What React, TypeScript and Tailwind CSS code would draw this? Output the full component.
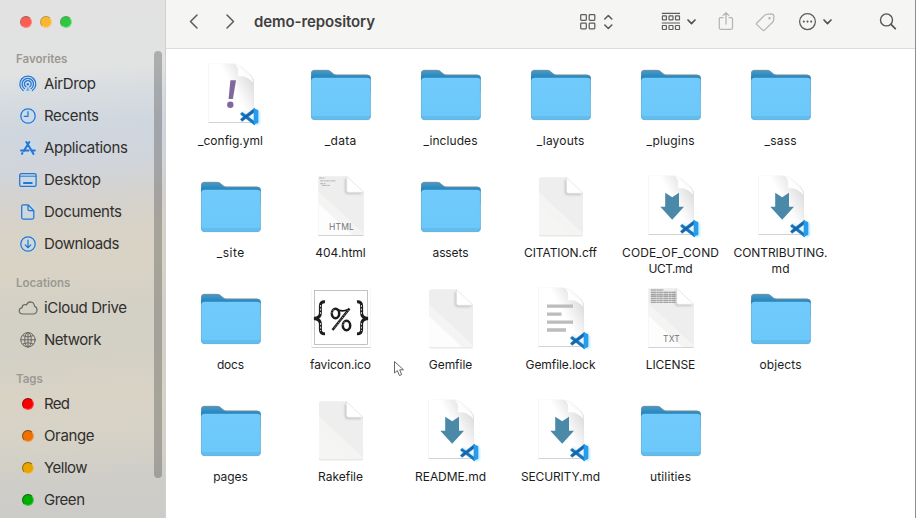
import React from "react";

type Kind = "folder" | "yml" | "md" | "lock" | "html" | "txt" | "blank" | "plain" | "ico";
type Entry = { lines: string[]; kind: Kind; w: number };

const entries: Entry[] = [
  { lines: ["_config.yml"], kind: "yml", w: 65 },
  { lines: ["_data"], kind: "folder", w: 31.5 },
  { lines: ["_includes"], kind: "folder", w: 54 },
  { lines: ["_layouts"], kind: "folder", w: 47.5 },
  { lines: ["_plugins"], kind: "folder", w: 48 },
  { lines: ["_sass"], kind: "folder", w: 32 },
  { lines: ["_site"], kind: "folder", w: 27.5 },
  { lines: ["404.html"], kind: "html", w: 50.5 },
  { lines: ["assets"], kind: "folder", w: 36 },
  { lines: ["CITATION.cff"], kind: "blank", w: 73 },
  { lines: ["CODE_OF_COND", "UCT.md"], kind: "md", w: 97 },
  { lines: ["CONTRIBUTING.", "md"], kind: "md", w: 94 },
  { lines: ["docs"], kind: "folder", w: 27 },
  { lines: ["favicon.ico"], kind: "ico", w: 61 },
  { lines: ["Gemfile"], kind: "plain", w: 43.5 },
  { lines: ["Gemfile.lock"], kind: "lock", w: 70 },
  { lines: ["LICENSE"], kind: "txt", w: 49.5 },
  { lines: ["objects"], kind: "folder", w: 42 },
  { lines: ["pages"], kind: "folder", w: 34.5 },
  { lines: ["Rakefile"], kind: "blank", w: 45 },
  { lines: ["README.md"], kind: "md", w: 71 },
  { lines: ["SECURITY.md"], kind: "md", w: 79 },
  { lines: ["utilities"], kind: "folder", w: 41 },
];

function Defs() {
  return (
    <svg className="absolute h-0 w-0" aria-hidden="true">
      <defs>
        <linearGradient id="front" x1="0" y1="0" x2="0" y2="1">
          <stop offset="0" stopColor="#70cbfc" />
          <stop offset="1" stopColor="#6cc8f9" />
        </linearGradient>
        <linearGradient id="back" x1="0" y1="0" x2="0" y2="1">
          <stop offset="0" stopColor="#4a9ac6" />
          <stop offset="0.4" stopColor="#1f82bb" />
        </linearGradient>
        <linearGradient id="curl" x1="0" y1="1" x2="1" y2="0">
          <stop offset="0.25" stopColor="#cfcfcf" />
          <stop offset="0.5" stopColor="#ffffff" />
          <stop offset="0.85" stopColor="#ebebeb" />
        </linearGradient>
        <linearGradient id="topShade" x1="0.45" y1="0.3" x2="0.8" y2="0.05">
          <stop offset="0" stopColor="#ffffff" />
          <stop offset="1" stopColor="#dedede" />
        </linearGradient>
        <filter id="drop" x="-10%" y="-10%" width="120%" height="125%">
          <feDropShadow dx="0" dy="0.5" stdDeviation="0.5" floodColor="#000" floodOpacity="0.35" />
        </filter>
        <filter id="soft" x="-20%" y="-20%" width="140%" height="140%">
          <feGaussianBlur stdDeviation="1" />
        </filter>
      </defs>
    </svg>
  );
}

function Folder() {
  return (
    <>
      <path d="M2 13.500V11.500q0-3.500 3.500-3.500H18q2.200 0 3.800 1.400L24.500 11.700q1.200 1 3 1H58q3.800 0 3.800 3.500V30H2z" fill="url(#back)" />
      <path d="M2.500 13.500V11.500q0-3.200 3-3.200H18q2 0 3.600 1.400L24.300 12q1.200 1 3 1H58q3.500 0 3.500 3" fill="none" stroke="#80919b" strokeWidth=".8" />
      <path d="M2 20q0-4.200 3.800-4.200H58q3.800 0 3.800 3.800V54q0 4-3.800 4H5.800q-3.800 0-3.800-4z" fill="url(#front)" />
      <path d="M2.200 54H61.600q0 3.800-3.600 3.800H5.800q-3.600 0-3.600-3.800z" fill="#62bdee" />
      <path d="M2.400 18.500V54q0 3.700 3.500 3.700H58q3.400 0 3.400-3.700V17.500" fill="none" stroke="#6fa6c6" strokeWidth=".7" opacity=".75" />
    </>
  );
}

function CodeBadge() {
  return (
    <g>
      <path d="M43 50 45 48.500 60 60V62L56 63z" fill="#b9eaff" opacity=".6" filter="url(#soft)" />
      <path d="M57 47 61 50V61L57 63.500z" fill="#9fe2ff" opacity=".7" filter="url(#soft)" />
      <path d="M41.500 51.800 43.200 50.300 55.500 59.600V63L42 52.800z" fill="#1475bd" stroke="#1475bd" strokeWidth=".5" strokeLinejoin="round" />
      <path d="M41.500 57.800 43.200 59.300 55.500 50V46.200L42 56.700z" fill="#1267ae" stroke="#1267ae" strokeWidth=".5" strokeLinejoin="round" />
      <path d="M54.700 46 59.300 48.200V60.700L54.700 63z" fill="#279cec" />
    </g>
  );
}

function CurledPage({ children }: { children?: React.ReactNode }) {
  return (
    <>
      <path d="M9.500 1.800H35q5 .5 10.500 5.500l6.500 6q2.800 3 2.800 7V60H9.500z" fill="url(#topShade)" filter="url(#drop)" />
      <path d="M35.500 2q4.500 2.500 3.600 12.800 8-1.800 15.400 6-.4-5-3.500-8L45 6.800Q40 2.400 35.500 2z" fill="url(#curl)" />
      <path d="M39.100 5.500V14.800Q44 13.500 47.500 14.800z" fill="#fff" />
      {children}
      <CodeBadge />
    </>
  );
}

function FoldedPage({ shade, wide, children }: { shade: boolean; wide?: boolean; children?: React.ReactNode }) {
  return (
    <g transform={wide ? "translate(-1.2 -1.300) scale(1.037 1.020)" : undefined}>
      <path d="M11.500 3.500H37.500L54 19.500V60q0 1.200-1.200 1.200H11.200Q10 61.200 10 60V5q0-1.500 1.500-1.500z" fill={shade ? "#f5f5f4" : "#fdfdfd"} filter="url(#drop)" />
      <path d="M11.500 3.500H37.500L54 19.500V60L10 19V5q0-1.500 1.500-1.500z" fill="#eeeeee" />
      <path d="M10 18 54 59.500V61H43L10 30z" fill="#f4f4f3" />
      <path d="M36.800 6V18q0 2 2 2H52" fill="none" stroke="#b5b5b5" strokeWidth="1.500" filter="url(#soft)" />
      <path d="M37.500 3.500V17.500q0 1.800 1.800 1.800H54z" fill="#fff" stroke="#d6d6d6" strokeWidth=".5" />
      {children}
    </g>
  );
}

function FileIcon({ kind }: { kind: Kind }) {
  return (
    <svg width="64" height="64" viewBox="0 0 64 64" className="block overflow-visible">
      {kind === "folder" && <Folder />}
      {kind === "yml" && (
        <CurledPage>
          <path d="M31.400 18.300H37L33.900 37H29.600z" fill="#80689f" />
          <circle cx="31.300" cy="42.700" r="3.200" fill="#80689f" />
        </CurledPage>
      )}
      {kind === "md" && (
        <CurledPage>
          <path d="M26.200 18.800 33.200 23.200 40 18.800V32.700H45L33.200 45.700 21.300 32.700H26.200z" fill="#4a8aa8" />
        </CurledPage>
      )}
      {kind === "lock" && (
        <CurledPage>
          <path d="M18 20.200H44M18 28.200H32.500M18 36.200H44M18 44H37" stroke="#bcbcbc" strokeWidth="3.300" />
        </CurledPage>
      )}
      {kind === "blank" && <FoldedPage shade />}
      {kind === "plain" && <FoldedPage shade={false} />}
      {kind === "html" && (
        <FoldedPage shade={false} wide>
          <path d="M11 5.200H16M12 8H27M12 10.800H17M14 12.500H21" stroke="#a2a2a2" strokeWidth=".8" strokeDasharray="3 .6 1.500 .4" />
          <text x="32.500" y="56" textAnchor="middle" fontSize="8.200" fontFamily="Inter, sans-serif" fill="#777" letterSpacing=".2">HTML</text>
        </FoldedPage>
      )}
      {kind === "txt" && (
        <FoldedPage shade={false} wide>
          <path d="M12.500 5.200H25M12.500 7.400H37M12.500 9.300H37M12.500 11.200H37M12.500 13.200H37M12.500 15.200H37M12.500 17.200H37" stroke="#8b8b8b" strokeWidth="1" strokeDasharray="5 .4 2.400 .3 3.500 .5" />
          <text x="32.500" y="55.800" textAnchor="middle" fontSize="8.200" fontFamily="Inter, sans-serif" fill="#777" letterSpacing=".2">TXT</text>
        </FoldedPage>
      )}
      {kind === "ico" && (
        <>
          <rect x="2.500" y="3" width="59.200" height="58" fill="#fff" filter="url(#drop)" />
          <rect x="5.500" y="4.500" width="53" height="54" fill="#fff" stroke="#a9a9a9" strokeWidth=".7" />
          <g fill="none" stroke="#1c1c1c" strokeLinecap="butt">
            <path d="M16 15.800Q11.400 15.400 11.400 20V27Q11.400 32 5 32.500 11.400 33 11.400 38V43.500Q11.400 48 16 47.800" strokeWidth="3" />
            <path d="M48 15.800Q52.600 15.400 52.600 20V27Q52.600 32 59 32.500 52.600 33 52.600 38V43.500Q52.600 48 48 47.800" strokeWidth="3" />
            <path d="M11.600 19V29M11.600 37V45M52.400 19V29M52.400 37V45" stroke="#d5d5d5" strokeWidth="1" strokeDasharray="2 1.500" />
            <path d="M40.500 22.500 23.500 44" strokeWidth="2.400" />
            <ellipse cx="26.500" cy="27.500" rx="3.700" ry="4.700" strokeWidth="2.500" />
            <ellipse cx="37.500" cy="39.500" rx="3.700" ry="4.700" strokeWidth="2.500" />
            <path d="M27 23Q33 26.500 39 23.500" strokeWidth="1.800" />
            <path d="M39.500 24 24.500 43M23 27.500a3.500 4.500 0 0 1 3.500-4.500M34 39.500a3.500 4.500 0 0 1 3.500-4.500" stroke="#c9c9c9" strokeWidth=".7" strokeDasharray="1.500 1.500" />
          </g>
        </>
      )}
    </svg>
  );
}

function Label({ text, w }: { text: string; w?: number }) {
  return (
    <svg width="108" height="16" className="block overflow-visible">
      <text x="53.500" y="12.300" textAnchor="middle" fontSize="12" fontWeight="400" fontFamily="Inter, sans-serif" fill="#1c1c1c" textLength={w} lengthAdjust="spacing">
        {text}
      </text>
    </svg>
  );
}

const blue = "#2476d2";
const grey = "#686762";

function SideIcon({ name }: { name: string }) {
  const c = name === "cloud" || name === "globe" ? grey : blue;
  return (
    <svg width="20" height="20" viewBox="0 0 20 20" fill="none" stroke={c} strokeWidth="1.250" strokeLinecap="round" strokeLinejoin="round" className="block overflow-visible">
      {name !== "cloud" && name !== "globe" && <circle cx="10.500" cy="10.500" r="8.500" fill="#bfe0fb" stroke="none" opacity=".4" filter="url(#soft)" />}
      {name === "airdrop" && (
        <>
          <path d="M5.200 16.600a8 8 0 1 1 9.200 0M6.500 14.700a5.700 5.700 0 1 1 6.600 0M7.900 12.800a3.400 3.400 0 1 1 3.800 0" />
          <circle cx="9.800" cy="10.200" r="1.200" fill={c} stroke="none" />
          <path d="M9.800 12.500 7.800 16.800H11.800z" fill={c} stroke="none" opacity=".5" />
        </>
      )}
      {name === "clock" && (
        <>
          <circle cx="10" cy="10" r="7.200" />
          <path d="M10 5.500V10.300H6.200" />
        </>
      )}
      {name === "apps" && (
        <g strokeWidth="2">
          <path d="M8.300 4 9.900 6.600M11.300 4 5.800 13M4 15.800 4.500 15M9.900 6.600 15.500 16" />
          <path d="M3 12.500H10.600M14.200 12.500H16.800" />
        </g>
      )}
      {name === "desktop" && (
        <>
          <rect x="1.700" y="3.700" width="16.400" height="12.600" rx="1.600" />
          <path d="M2 6.200H18" strokeWidth="1" />
          <path d="M5.200 13H14.500" strokeWidth="2" strokeLinecap="butt" />
        </>
      )}
      {name === "doc" && (
        <path d="M5 2.800H10L15.800 8.600V15.500q0 1.500-1.500 1.500H5.200q-1.500 0-1.500-1.500V4.300q0-1.500 1.300-1.500zM10 3V7.200q0 1.400 1.400 1.400H15.500" />
      )}
      {name === "download" && (
        <>
          <circle cx="10" cy="10" r="7.200" />
          <path d="M10 6V13.500M7.200 10.900 10 13.700 12.800 10.900" />
        </>
      )}
      {name === "cloud" && (
        <path d="M5 16Q1.200 15.800 1.200 12.700 1.300 10 4.200 9.600 4 7 6.400 6.600q1.200-.3 2 .4Q9.700 3.900 12.500 3.900q3.700.3 4 4.400 2.500.8 2.500 3.700Q18.800 15.700 15.200 16z" strokeWidth="1.150" />
      )}
      {name === "globe" && (
        <g strokeWidth="1">
          <circle cx="10" cy="9.800" r="7.200" />
          <ellipse cx="10" cy="9.800" rx="3.300" ry="7.200" />
          <path d="M10 2.600V17M2.800 9.800H17.200M4.500 5.700Q10 8.500 15.500 5.700M4.500 14Q10 11.200 15.500 14" />
        </g>
      )}
    </svg>
  );
}

function SideItem({ icon, dot, text, w }: { icon?: string; dot?: string; text: string; w: number }) {
  return (
    <li className="flex h-8 items-center pb-px pl-[18px]">
      <span className="flex w-5 justify-center">
        {icon ? <SideIcon name={icon} /> : <span className={"mt-px mr-px h-3 w-3 rounded-full border border-t-black/45 border-l-black/35 border-r-white/30 border-b-white/30 " + dot} />}
      </span>
      <svg width="110" height="20" className="ml-1.5 block overflow-visible">
        <text x="0" y="15.200" fontSize="15" fontFamily="Inter, sans-serif" fill="#302f2d" textLength={w} lengthAdjust="spacing">{text}</text>
      </svg>
    </li>
  );
}

function Section({ title, children }: { title: string; children: React.ReactNode }) {
  return (
    <section>
      <h2 className="flex h-8 items-end pb-px pl-4 font-[Inter] text-[11.500px] leading-4 font-semibold text-[#9b9993]">{title}</h2>
      <ul>{children}</ul>
    </section>
  );
}

function Chevron() {
  return (
    <svg width="9" height="6" fill="none" stroke="#565656" strokeWidth="1.700" strokeLinecap="round" strokeLinejoin="round" className="block">
      <path d="M1 1 4.500 4.700 8 1" />
    </svg>
  );
}

function Toolbar() {
  return (
    <header className="flex h-[49px] items-center border-b border-[#dcdcdb] bg-[#f5f5f3] pb-[5px]">
      <svg width="60" height="20" fill="none" stroke="#5b5b5b" strokeWidth="1.500" strokeLinecap="round" strokeLinejoin="round" className="ml-5 block">
        <path d="M11 3 4.500 9.500 11 16M41 3 47.500 9.500 41 16" />
      </svg>
      <svg width="130" height="24" className="ml-2 block overflow-visible">
        <text x="0" y="17" fontSize="15" fontWeight="600" fontFamily="Inter, sans-serif" fill="#3f3f3f" textLength="121" lengthAdjust="spacing">demo-repository</text>
      </svg>
      <svg width="34" height="20" fill="none" stroke="#5d5d5b" strokeWidth="1.250" strokeLinecap="round" strokeLinejoin="round" className="ml-[195px] block">
        <rect x="1.700" y="2.700" width="5.600" height="5.600" rx=".8" />
        <rect x="10.200" y="2.700" width="5.600" height="5.600" rx=".8" />
        <rect x="1.700" y="11.200" width="5.600" height="5.600" rx=".8" />
        <rect x="10.200" y="11.200" width="5.600" height="5.600" rx=".8" />
        <path d="M25.800 7 29.300 3.500 32.800 7M25.800 13 29.300 16.500 32.800 13" strokeWidth="1.600" />
      </svg>
      <svg width="20" height="20" fill="none" stroke="#5d5d5b" strokeWidth="1.200" className="ml-12 block">
        <path d="M.8 1.300H19M.8 11H19" />
        <rect x="1.400" y="3.900" width="4" height="4" rx=".5" />
        <rect x="8" y="3.900" width="4" height="4" rx=".5" />
        <rect x="14.500" y="3.900" width="4" height="4" rx=".5" />
        <rect x="1.400" y="13.500" width="4" height="4" rx=".5" />
        <rect x="8" y="13.500" width="4" height="4" rx=".5" />
        <rect x="14.500" y="13.500" width="4" height="4" rx=".5" />
      </svg>
      <span className="ml-1.5"><Chevron /></span>
      <svg width="16" height="20" fill="none" stroke="#b5b5b3" strokeWidth="1.250" strokeLinecap="round" strokeLinejoin="round" className="ml-[22px] block">
        <path d="M5 5.700H2.500Q1.300 5.700 1.300 7V15.800q0 1.500 1.500 1.500H13q1.500 0 1.500-1.500V7q0-1.300-1.200-1.300H11M8 12V.700M5.200 3.400 8 .700 10.800 3.400" />
      </svg>
      <svg width="21" height="20" fill="none" stroke="#b5b5b3" strokeWidth="1.250" strokeLinecap="round" strokeLinejoin="round" className="ml-[21px] block">
        <path d="M1.600 11.300 9.500 3.400q1-1 2.300-1.100l4.200-.4q2.700.1 2.900 2.600l-.3 3.600q-.1 1.200-1 2.200L9.500 18.100q-.8.8-1.800 0L1.600 12.400q-.5-.5 0-1.100z" />
        <circle cx="14.500" cy="6.200" r=".6" fill="#b5b5b3" />
      </svg>
      <svg width="19" height="20" className="ml-[22px] block">
        <circle cx="9.500" cy="9.600" r="7.900" fill="none" stroke="#5d5d5b" strokeWidth="1.250" />
        <circle cx="5.800" cy="9.600" r="1.050" fill="#5d5d5b" />
        <circle cx="9.500" cy="9.600" r="1.050" fill="#5d5d5b" />
        <circle cx="13.200" cy="9.600" r="1.050" fill="#5d5d5b" />
      </svg>
      <span className="ml-1.5"><Chevron /></span>
      <svg width="18" height="20" fill="none" stroke="#565654" strokeLinecap="round" className="ml-[46.500px] block">
        <circle cx="7.500" cy="7.900" r="6" strokeWidth="1.400" />
        <path d="M12 12.400 16.300 16.700" strokeWidth="1.800" />
      </svg>
    </header>
  );
}

export default function App() {
  return (
    <div className="relative flex h-[518px] w-[916px] overflow-hidden bg-white font-[Inter]">
      <Defs />
      <aside className="relative h-full w-[166px] shrink-0 border-r border-[#d0d0cd] bg-[linear-gradient(176deg,#e2e2e2_0%,#e1e2e2_14%,#d7dce0_19%,#cfd6de_25%,#d1d5db_32%,#d4d2cf_38%,#d8d3c6_45%,#d8d3c5_52%,#d3d0c5_60%,#d3d0c5_67%,#d8d3c5_76%,#d6d2c6_84%,#cecdc8_92%,#cccbc8_100%)]">
        <div className="flex h-9 gap-2 pt-4 pl-5">
          <span className="h-3 w-3 rounded-full border border-t-[#9c5f58] border-l-[#b96c65] border-r-[#ff8981] border-b-[#ff8981] bg-[#fb5d55]" />
          <span className="h-3 w-3 rounded-full border border-t-[#b39256] border-l-[#c39c4a] border-r-[#fcce7c] border-b-[#fcce7c] bg-[#fbb630]" />
          <span className="h-3 w-3 rounded-full border border-t-[#669565] border-l-[#5c9b5b] border-r-[#83e28f] border-b-[#83e28f] bg-[#2bc840]" />
        </div>
        <Section title="Favorites">
          <SideItem icon="airdrop" text="AirDrop" w={52} />
          <SideItem icon="clock" text="Recents" w={55} />
          <SideItem icon="apps" text="Applications" w={84} />
          <SideItem icon="desktop" text="Desktop" w={57} />
          <SideItem icon="doc" text="Documents" w={78} />
          <SideItem icon="download" text="Downloads" w={75.5} />
        </Section>
        <Section title="Locations">
          <SideItem icon="cloud" text="iCloud Drive" w={83} />
          <SideItem icon="globe" text="Network" w={57.5} />
        </Section>
        <Section title="Tags">
          <SideItem dot="bg-[#fb0000]" text="Red" w={26} />
          <SideItem dot="bg-[#ed7000]" text="Orange" w={50.5} />
          <SideItem dot="bg-[#e8a400]" text="Yellow" w={43.5} />
          <SideItem dot="bg-[#00ae00]" text="Green" w={41} />
        </Section>
        <div className="absolute top-[51px] left-[154px] h-[427px] w-2 rounded-full bg-[#4a4a4a]/35" />
      </aside>
      <main className="min-w-0 flex-1">
        <Toolbar />
        <div className="grid auto-rows-[112px] grid-cols-[repeat(6,110px)] pt-[13px] pl-2.5">
          {entries.map((e) => (
            <div key={e.lines[0]} className="flex flex-col items-center">
              <FileIcon kind={e.kind} />
              <div className="mt-[7px]">
                {e.lines.map((l, i) => (
                  <Label key={l} text={l} w={i === 0 ? e.w : l === "md" ? 18 : 44} />
                ))}
              </div>
            </div>
          ))}
        </div>
      </main>
      <svg width="12" height="18" viewBox="0 0 12 18" className="absolute top-[360px] left-[393px]">
        <path d="M1.500 1.500V13L4.300 10.500 6.400 15.500 8.700 14.600 6.700 9.800H10.500z" fill="#fff" stroke="#666" strokeWidth="1" strokeLinejoin="round" />
      </svg>
      <div className="absolute top-0 right-0 h-full w-px bg-[#8d8d8a]" />
    </div>
  );
}
